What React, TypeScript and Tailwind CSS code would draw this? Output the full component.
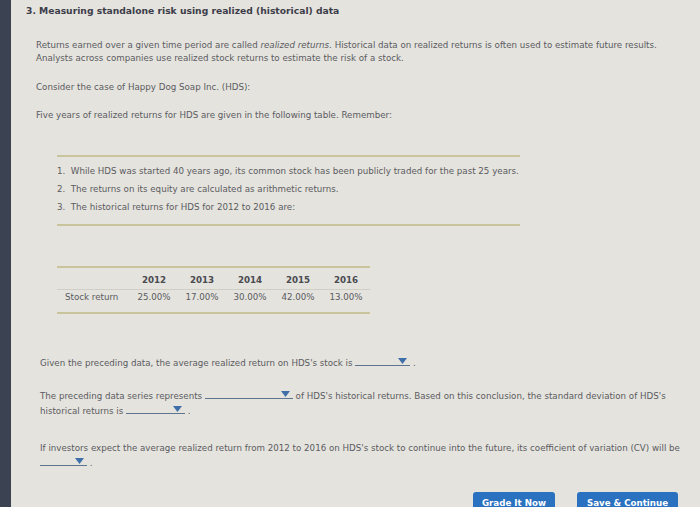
import React from 'react'

const font = { fontFamily: '"DejaVu Sans", Verdana, sans-serif' }

function Dropdown({ width }: { width: string }) {
  return (
    <span className={`relative inline-block ${width} h-[9px] border-b border-[#5d7590] align-baseline`}>
      <svg
        className="absolute right-[3px] top-[1px]"
        width="9"
        height="6"
        viewBox="0 0 9 6"
      >
        <path d="M0 0 L9 0 L4.5 6 Z" fill="#3f6fa8" />
      </svg>
    </span>
  )
}

export default function App() {
  const years = ['2012', '2013', '2014', '2015', '2016']
  const returns = ['25.00%', '17.00%', '30.00%', '42.00%', '13.00%']

  return (
    <div
      className="flex w-[700px] h-[507px] overflow-hidden bg-[#e4e3de] text-[#5b5b5e]"
      style={font}
    >
      {/* dark screen edge */}
      <div className="w-[11px] shrink-0 bg-[#3b4252]" />

      <div className="relative flex-1 pl-[15px] pt-[4px] text-[8.7px]">
        <h1 className="text-[9.2px] font-bold text-[#3d3d4a] leading-[13px]">
          3. Measuring standalone risk using realized (historical) data
        </h1>

        <div className="pl-[10px] mt-[22px] leading-[13px]">
          <p>
            Returns earned over a given time period are called <em>realized returns</em>. Historical data on
            realized returns is often used to estimate future results.
          </p>
          <p>Analysts across companies use realized stock returns to estimate the risk of a stock.</p>

          <p className="mt-[16px]">Consider the case of Happy Dog Soap Inc. (HDS):</p>
          <p className="mt-[15px]">Five years of realized returns for HDS are given in the following table. Remember:</p>
        </div>

        {/* remember list */}
        <div className="ml-[31px] w-[463px] mt-[33px]">
          <div className="h-[2px] bg-[#c9c49c]" />
          <ol className="pt-[5px] pb-[8px] leading-[18px]">
            <li>1.&nbsp; While HDS was started 40 years ago, its common stock has been publicly traded for the past 25 years.</li>
            <li>2.&nbsp; The returns on its equity are calculated as arithmetic returns.</li>
            <li>3.&nbsp; The historical returns for HDS for 2012 to 2016 are:</li>
          </ol>
          <div className="h-[2px] bg-[#c9c49c]" />
        </div>

        {/* returns table */}
        <div className="ml-[31px] w-[313px] mt-[40px] leading-[12px]">
          <div className="h-[2px] bg-[#c9c49c]" />
          <div className="flex pt-[6px] pb-[3px] font-bold text-[#4a4a50]">
            <div className="w-[73px]" />
            {years.map((y) => (
              <div key={y} className="w-[48px] text-center">{y}</div>
            ))}
          </div>
          <div className="h-px bg-[#cfcfc8]" />
          <div className="flex pt-[1px] pb-[9px]">
            <div className="w-[73px] pl-[8px]">Stock return</div>
            {returns.map((r) => (
              <div key={r} className="w-[48px] text-center">{r}</div>
            ))}
          </div>
          <div className="h-[2px] bg-[#c9c49c]" />
        </div>

        {/* questions */}
        <div className="pl-[14px] mt-[42px] leading-[15px]">
          <p>
            Given the preceding data, the average realized return on HDS's stock is{' '}
            <Dropdown width="w-[55px]" /> .
          </p>

          <p className="mt-[18px]">
            The preceding data series represents <Dropdown width="w-[88px]" /> of HDS's historical returns. Based on
            this conclusion, the standard deviation of HDS's
            <br />
            historical returns is <Dropdown width="w-[59px]" /> .
          </p>

          <p className="mt-[22px]">
            If investors expect the average realized return from 2012 to 2016 on HDS's stock to continue into the
            future, its coefficient of variation (CV) will be
            <br />
            <Dropdown width="w-[47px]" /> .
          </p>
        </div>

        {/* action buttons */}
        <div className="absolute left-[462px] top-[492px] flex gap-[22px]">
          <button className="w-[82px] h-[24px] rounded-[3px] bg-[#2a72bf] text-white font-bold text-[8.7px]">
            Grade It Now
          </button>
          <button className="w-[101px] h-[24px] rounded-[3px] bg-[#2a72bf] text-white font-bold text-[8.7px]">
            Save &amp; Continue
          </button>
        </div>
      </div>
    </div>
  )
}
